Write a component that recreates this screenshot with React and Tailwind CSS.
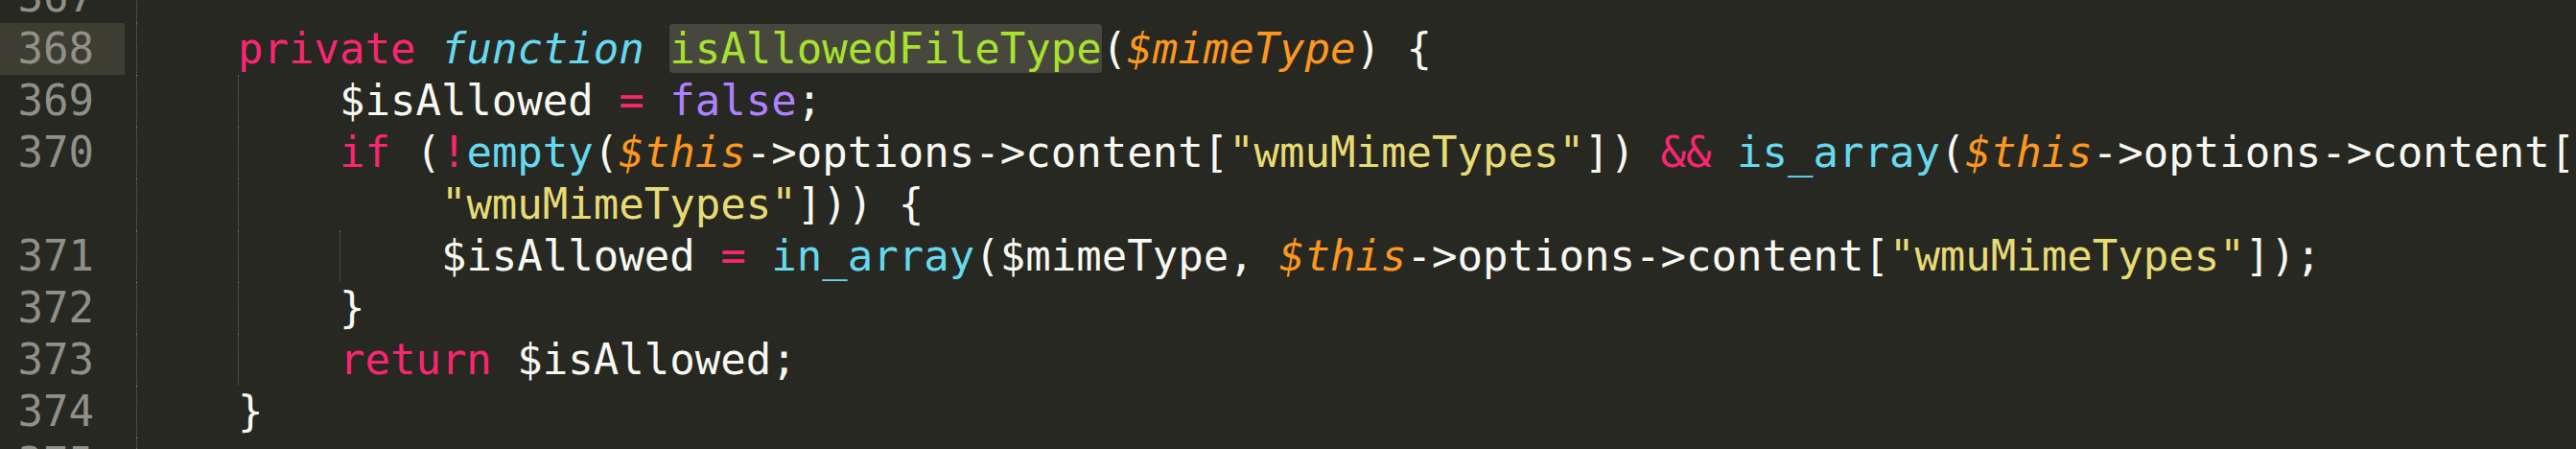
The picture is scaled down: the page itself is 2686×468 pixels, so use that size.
import React from "react";

const W = "text-[#f8f8f2]";
const PINK = "text-[#f92672]";
const CYAN = "text-[#66d9ef]";
const CYAN_I = "text-[#66d9ef] italic";
const GREEN = "text-[#a6e22e]";
const ORANGE_I = "text-[#fd971f] italic";
const PURPLE = "text-[#ae81ff]";
const YELLOW = "text-[#e6db74]";

const guideClass = {
  0: "left-0",
  4: "left-[106px]",
  8: "left-[212px]",
};

const rows = [
  { num: "367", guides: [0], tokens: [] },
  {
    num: "368",
    hl: true,
    guides: [0],
    tokens: [
      ["    ", W],
      ["private", PINK],
      [" ", W],
      ["function", CYAN_I],
      [" ", W],
      ["isAllowedFileType", GREEN + " bg-[#47473e] rounded-[4px]"],
      ["(", W],
      ["$mimeType", ORANGE_I],
      [") {", W],
    ],
  },
  {
    num: "369",
    guides: [0, 4],
    tokens: [
      ["        ", W],
      ["$isAllowed ", W],
      ["=", PINK],
      [" ", W],
      ["false", PURPLE],
      [";", W],
    ],
  },
  {
    num: "370",
    guides: [0, 4],
    tokens: [
      ["        ", W],
      ["if", PINK],
      [" (", W],
      ["!", PINK],
      ["empty", CYAN],
      ["(", W],
      ["$this", ORANGE_I],
      ["->options->content[", W],
      ['"wmuMimeTypes"', YELLOW],
      ["]) ", W],
      ["&&", PINK],
      [" ", W],
      ["is_array", CYAN],
      ["(", W],
      ["$this", ORANGE_I],
      ["->options->content[", W],
    ],
  },
  {
    num: "",
    guides: [0, 4],
    tokens: [
      ["            ", W],
      ['"wmuMimeTypes"', YELLOW],
      ["])) {", W],
    ],
  },
  {
    num: "371",
    guides: [0, 4, 8],
    tokens: [
      ["            ", W],
      ["$isAllowed ", W],
      ["=", PINK],
      [" ", W],
      ["in_array", CYAN],
      ["($mimeType, ", W],
      ["$this", ORANGE_I],
      ["->options->content[", W],
      ['"wmuMimeTypes"', YELLOW],
      ["]);", W],
    ],
  },
  {
    num: "372",
    guides: [0, 4],
    tokens: [
      ["        ", W],
      ["}", W],
    ],
  },
  {
    num: "373",
    guides: [0, 4],
    tokens: [
      ["        ", W],
      ["return", PINK],
      [" $isAllowed;", W],
    ],
  },
  {
    num: "374",
    guides: [0],
    tokens: [
      ["    ", W],
      ["}", W],
    ],
  },
  { num: "375", guides: [0], tokens: [] },
];

export default function App() {
  return (
    <div
      className="h-[468px] w-[2686px] overflow-hidden bg-[#272822] text-[44px] leading-[54px]"
      style={{ fontFamily: '"DejaVu Sans Mono", "Liberation Mono", monospace' }}
    >
      <div className="-mt-[30px] flex flex-col">
        {rows.map((r, i) => (
          <div key={i} className="flex h-[54px]">
            <div
              className={
                "w-[130px] shrink-0 pr-[32px] text-right text-[#90908a] " +
                (r.hl ? "bg-[#3e3d32]" : "")
              }
            >
              {r.num}
            </div>
            <div className="w-[12px] shrink-0" />
            <div className="relative min-w-0 flex-1 overflow-hidden whitespace-pre">
              {r.guides.map((g) => (
                <span
                  key={g}
                  className={
                    "absolute top-0 bottom-0 w-0 border-l border-dotted border-[#6b6b62] " +
                    guideClass[g]
                  }
                />
              ))}
              {r.tokens.map((t, j) => (
                <span key={j} className={t[1]}>
                  {t[0]}
                </span>
              ))}
            </div>
          </div>
        ))}
      </div>
    </div>
  );
}
